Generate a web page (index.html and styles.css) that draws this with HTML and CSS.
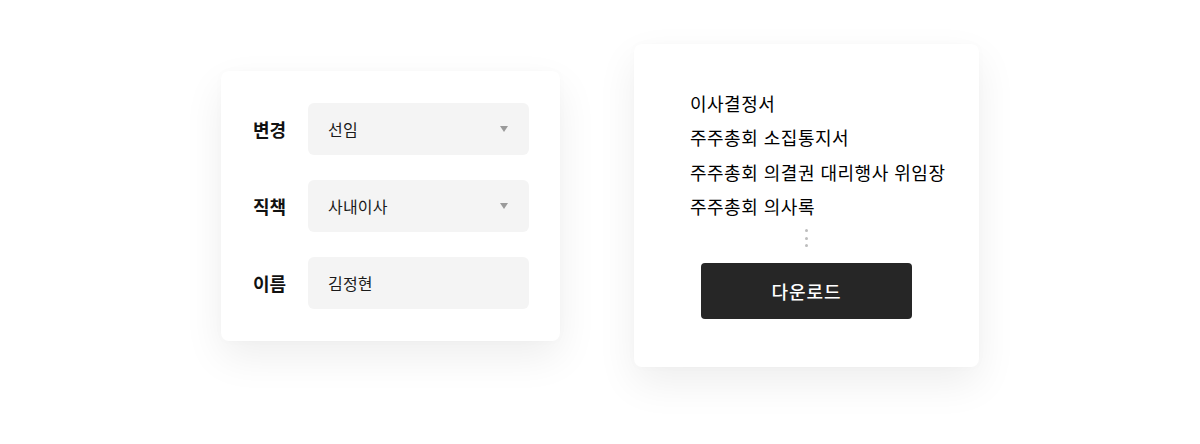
FILE: index.html
```html
<!DOCTYPE html>
<html lang="ko">
<head>
<meta charset="utf-8">
<link rel="stylesheet" href="styles.css">
</head>
<body>
<main class="stage">
  <section class="card form-card">
    <div class="row">
      <span class="label">변경</span>
      <div class="field select"><span>선임</span><i class="caret"></i></div>
    </div>
    <div class="row">
      <span class="label">직책</span>
      <div class="field select"><span>사내이사</span><i class="caret"></i></div>
    </div>
    <div class="row">
      <span class="label">이름</span>
      <div class="field"><span>김정현</span></div>
    </div>
  </section>
  <section class="card doc-card">
    <ul class="docs">
      <li>이사결정서</li>
      <li>주주총회 소집통지서</li>
      <li>주주총회 의결권 대리행사 위임장</li>
      <li>주주총회 의사록</li>
    </ul>
    <div class="more"><i></i><i></i><i></i></div>
    <button class="download">다운로드</button>
  </section>
</main>
</body>
</html>
```
FILE: styles.css
```css
* { box-sizing: border-box; }
html, body { margin: 0; padding: 0; background: #fff; }
body {
  font-family: "Noto Sans CJK KR", "Noto Sans", sans-serif;
  color: #111;
}
.stage {
  height: 444px;
  display: flex;
  justify-content: center;
  align-items: center;
  gap: 74px;
  padding-bottom: 33px;
}
.card {
  background: #fff;
  border-radius: 8px;
  box-shadow: 0 16px 40px rgba(0, 0, 0, 0.07), 0 0 10px rgba(0,0,0,0.02);
}
.form-card {
  width: 339px;
  padding: 32px 31px 32px 32px;
  display: flex;
  flex-direction: column;
  gap: 25px;
}
.row {
  display: flex;
  align-items: center;
}
.label {
  width: 55px;
  font-size: 18px;
  font-weight: 700;
  letter-spacing: 0;
  color: #111;
}
.field {
  width: 221px;
  height: 52px;
  background: #f4f4f4;
  border-radius: 6px;
  padding: 0 21px 0 20px;
  display: flex;
  align-items: center;
  justify-content: space-between;
  font-size: 16px;
  color: #1a1a1a;
  letter-spacing: 0.2px;
}
.caret {
  width: 0;
  height: 0;
  border-left: 4.5px solid transparent;
  border-right: 4.5px solid transparent;
  border-top: 6px solid #9a9a9a;
}
.doc-card {
  width: 345px;
  padding: 42px 0 48px 56px;
}
.docs {
  list-style: none;
  margin: 0;
  padding: 0;
}
.docs li {
  font-size: 18px;
  line-height: 34.4px;
  color: #000;
  letter-spacing: 0.5px;
  white-space: nowrap;
}
.more {
  margin: 6px 0 0 -56px;
  display: flex;
  flex-direction: column;
  align-items: center;
  gap: 4.5px;
}
.more i {
  display: block;
  width: 3px;
  height: 3px;
  border-radius: 50%;
  background: #bdbdbd;
}
.download {
  display: block;
  margin: 16px 0 0 11px;
  width: 211px;
  height: 56px;
  border: 0;
  border-radius: 4px;
  background: #262626;
  color: #fff;
  font-family: inherit;
  font-size: 18px;
  font-weight: 500;
  letter-spacing: 1px;
}
```
